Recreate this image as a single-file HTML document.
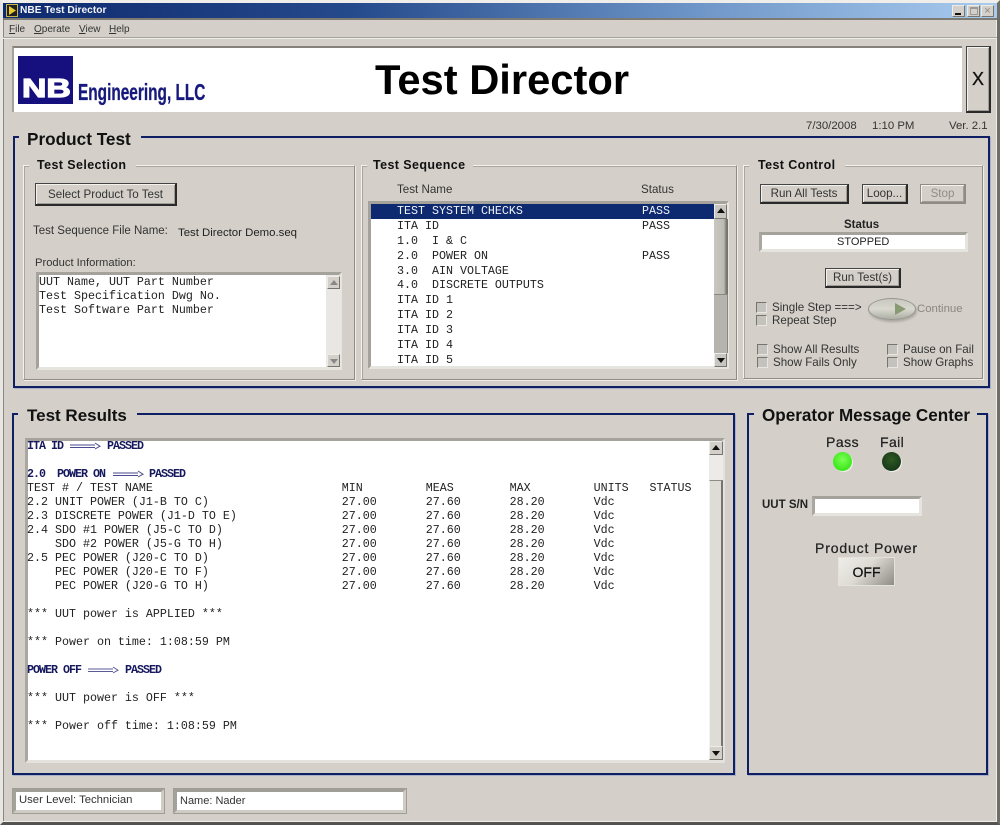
<!DOCTYPE html>
<html><head><meta charset="utf-8"><title>NBE Test Director</title>
<style>
html,body{margin:0;padding:0;background:#d4d0c9;}
#w{position:relative;width:1000px;height:825px;overflow:hidden;background:#d4d0c9;font-family:"Liberation Sans",sans-serif;color:#222;}
#w div,#w span.t{position:absolute;box-sizing:border-box;}
.t{white-space:pre;line-height:14px;font-size:11.6px;color:#333;}
.m{font-family:"Liberation Mono",monospace;font-size:11.67px;color:#222;}
.b{font-weight:bold;color:#111;}
.navy{border:2px solid #0f1f63;box-shadow:1px 1px 0 #aab0c8;}
.gap{background:#d4d0c9;height:4px;}
.gr{border:1px solid;border-color:#f4f2ee #8f8c86 #8f8c86 #f4f2ee;box-shadow:1px 1px 0 #f0eeea,inset 1px 1px 0 #a9a69f;}
.btn{background:#d4d0c9;border:1px solid #444;border-right:2px solid #2a2a2a;border-bottom:2px solid #2a2a2a;box-shadow:inset 1px 1px 0 #f4f2ee,inset -1px -1px 0 #a09d96;text-align:center;font-size:11.6px;color:#333;line-height:18px;}
.ins{background:#fff;border:3px solid #c2bfb8;border-top-color:#a5a29c;border-left-color:#aaa7a0;border-right-color:#e6e4df;border-bottom-color:#e6e4df;}
.cb{width:11px;height:11px;background:#c4c2bd;border:1px solid #e8e6e2;border-top-color:#77746e;border-left-color:#77746e;}
.sb{background:#c8c6c0;border:1px solid #eeece8;border-right-color:#77746e;border-bottom-color:#77746e;text-align:center;}
.up{width:0;height:0;border-left:4px solid transparent;border-right:4px solid transparent;border-bottom:5px solid #111;left:2px;top:3px;}
.dn{width:0;height:0;border-left:4px solid transparent;border-right:4px solid transparent;border-top:5px solid #111;left:2px;top:4px;}
.hl{font-family:"Liberation Mono",monospace;font-size:11.67px;letter-spacing:-1px;color:#16185e;font-weight:bold;}
</style></head><body><div id="w">

<!-- window frame -->
<div style="left:0;top:0;width:1000px;height:825px;border:3px solid #d4d0c9;border-top-color:#f0eeea;border-left-color:#e8e6e2;border-right-color:#6f6d68;border-bottom-color:#55534f;"></div>
<div style="left:3px;top:3px;width:1px;height:819px;background:#8a8780;"></div>
<div style="left:996px;top:20px;width:1px;height:802px;background:#f0eeea;"></div>
<div style="left:3px;top:821px;width:994px;height:1px;background:#f0eeea;"></div>
<div style="left:3px;top:3px;width:994px;height:15px;background:linear-gradient(90deg,#0e2a6e 0%,#254a8c 35%,#6f96c8 70%,#a8cbee 100%);"></div>
<div style="left:3px;top:18px;width:994px;height:2px;background:#7d7a74;"></div>
<div style="left:6px;top:4px;width:12px;height:13px;background:#222;border:1px solid #c9b64a;"></div>
<svg style="position:absolute;left:8px;top:6px" width="9" height="9"><path d="M1 0 L8 4.5 L1 9 Z" fill="#e8c92e"/></svg>
<span class="t b" style="left:20px;top:3px;color:#f4f4f8;font-size:10.2px;line-height:16px;">NBE Test Director</span>
<div class="sb" style="left:952px;top:5px;width:13px;height:12px;background:#d4d0c9;"><div style="left:2px;bottom:1px;width:6px;height:2px;background:#111;"></div></div>
<div class="sb" style="left:967px;top:5px;width:13px;height:12px;background:#d4d0c9;"><div style="left:2px;top:1px;width:8px;height:8px;border:1px solid #999;border-top-width:2px;"></div></div>
<div class="sb" style="left:981px;top:5px;width:13px;height:12px;background:#d4d0c9;color:#888;font-size:11px;line-height:10px;">×</div>

<!-- menu -->
<span class="t" style="left:9px;top:23px;font-size:10px;"><u>F</u>ile</span>
<span class="t" style="left:34px;top:23px;font-size:10px;"><u>O</u>perate</span>
<span class="t" style="left:79px;top:23px;font-size:10px;"><u>V</u>iew</span>
<span class="t" style="left:109px;top:23px;font-size:10px;"><u>H</u>elp</span>
<div style="left:3px;top:37px;width:994px;height:1px;background:#a5a29c;"></div>
<div style="left:3px;top:38px;width:994px;height:1px;background:#f0eeea;"></div>

<!-- banner -->
<div style="left:12px;top:46px;width:950px;height:66px;background:#fff;border-top:2px solid #85827c;border-left:2px solid #a5a29c;"></div>
<div style="left:18px;top:56px;width:55px;height:48px;background:#16107e;"></div>
<span class="t" style="left:22px;top:76px;font-size:26px;line-height:24px;font-weight:bold;color:#fff;letter-spacing:0;transform-origin:0 0;transform:scaleX(1.3);-webkit-text-stroke:1.2px #fff;">NB</span>
<span class="t" style="left:78px;top:79px;font-size:23.5px;line-height:26px;font-weight:bold;color:#17197c;transform-origin:0 0;transform:scaleX(.655);-webkit-text-stroke:.3px #17197c;">Engineering, LLC</span>
<span class="t" style="left:375px;top:56px;font-size:41.7px;line-height:48px;font-weight:bold;color:#000;">Test Director</span>
<div class="btn" style="left:966px;top:46px;width:25px;height:67px;font-size:18px;line-height:64px;color:#111;-webkit-text-stroke:.3px #111;">X</div>
<span class="t" style="left:806px;top:119px;font-size:11.4px;">7/30/2008</span>
<span class="t" style="left:872px;top:119px;font-size:11.4px;">1:10 PM</span>
<span class="t" style="left:949px;top:119px;font-size:11.4px;">Ver. 2.1</span>

<!-- Product Test group -->
<div class="navy" style="left:13px;top:136px;width:977px;height:252px;"></div>
<div class="gap" style="left:19px;top:135px;width:122px;"></div>
<span class="t b" style="left:27px;top:130px;font-size:17.2px;line-height:18px;">Product Test</span>

<!-- Test Selection -->
<div class="gr" style="left:23px;top:165px;width:332px;height:215px;"></div>
<div class="gap" style="left:29px;top:164px;width:107px;"></div>
<span class="t b" style="left:37px;top:158px;font-size:12.5px;letter-spacing:.4px;">Test Selection</span>
<div class="btn" style="left:35px;top:183px;width:142px;height:23px;line-height:21px;">Select Product To Test</div>
<span class="t" style="left:33px;top:224px;font-size:11.5px;">Test Sequence File Name:</span>
<span class="t" style="left:178px;top:226px;color:#222;font-size:11.4px;">Test Director Demo.seq</span>
<span class="t" style="left:35px;top:256px;font-size:11.2px;">Product Information:</span>
<div class="ins" style="left:36px;top:272px;width:306px;height:98px;border-color:#a5a29c #e6e4df #e6e4df #a5a29c;"></div>
<span class="t m" style="left:39px;top:275px;">UUT Name, UUT Part Number
Test Specification Dwg No.
Test Software Part Number</span>
<div style="left:326px;top:275px;width:15px;height:93px;background:#e9e7e3;"></div>
<div class="sb" style="left:327px;top:276px;width:13px;height:13px;background:#d4d0c9;"><div class="up" style="border-bottom-color:#888;"></div></div>
<div class="sb" style="left:327px;top:354px;width:13px;height:13px;background:#d4d0c9;"><div class="dn" style="border-top-color:#888;"></div></div>

<!-- Test Sequence -->
<div class="gr" style="left:361px;top:165px;width:376px;height:215px;"></div>
<div class="gap" style="left:367px;top:164px;width:106px;"></div>
<span class="t b" style="left:373px;top:158px;font-size:12.5px;letter-spacing:.4px;">Test Sequence</span>
<span class="t" style="left:397px;top:183px;">Test Name</span>
<span class="t" style="left:641px;top:183px;">Status</span>
<div class="ins" style="left:368px;top:201px;width:361px;height:168px;border-color:#a5a29c #e6e4df #e6e4df #a5a29c;"></div>
<div style="left:371px;top:204px;width:343px;height:15px;background:#0d2a70;"></div>
<span class="t m" style="left:397px;top:204px;color:#f2f2f6;">TEST SYSTEM CHECKS</span>
<span class="t m" style="left:642px;top:204px;color:#f2f2f6;">PASS</span>
<span class="t m" style="left:397px;top:219px;">ITA ID</span><span class="t m" style="left:642px;top:219px;">PASS</span>
<span class="t m" style="left:397px;top:234px;">1.0  I &amp; C</span>
<span class="t m" style="left:397px;top:249px;">2.0  POWER ON</span><span class="t m" style="left:642px;top:249px;">PASS</span>
<span class="t m" style="left:397px;top:264px;">3.0  AIN VOLTAGE</span>
<span class="t m" style="left:397px;top:278px;">4.0  DISCRETE OUTPUTS</span>
<span class="t m" style="left:397px;top:293px;">ITA ID 1</span>
<span class="t m" style="left:397px;top:308px;">ITA ID 2</span>
<span class="t m" style="left:397px;top:323px;">ITA ID 3</span>
<span class="t m" style="left:397px;top:338px;">ITA ID 4</span>
<span class="t m" style="left:397px;top:353px;">ITA ID 5</span>
<div style="left:714px;top:219px;width:14px;height:76px;background:linear-gradient(90deg,#c9c7c1,#bdbbb5 70%,#77746e 90%);border-bottom:1px solid #8a8780;"></div>
<div style="left:714px;top:295px;width:14px;height:58px;background:#b6b4af;border-right:1px solid #8a8780;"></div>
<div class="sb" style="left:714px;top:204px;width:13px;height:15px;"><div class="up"></div></div>
<div class="sb" style="left:714px;top:353px;width:13px;height:14px;"><div class="dn"></div></div>

<!-- Test Control -->
<div class="gr" style="left:743px;top:165px;width:240px;height:214px;"></div>
<div class="gap" style="left:749px;top:164px;width:96px;"></div>
<span class="t b" style="left:758px;top:158px;font-size:12.5px;letter-spacing:.4px;">Test Control</span>
<div class="btn" style="left:760px;top:184px;width:89px;height:20px;">Run All Tests</div>
<div class="btn" style="left:862px;top:184px;width:46px;height:20px;">Loop...</div>
<div class="btn" style="left:920px;top:184px;width:46px;height:20px;color:#8f8c86;border-color:#8f8c86;">Stop</div>
<span class="t" style="left:844px;top:218px;font-size:11.5px;font-weight:bold;color:#222;">Status</span>
<div class="ins" style="left:759px;top:232px;width:209px;height:20px;"></div>
<span class="t" style="left:837px;top:235px;font-size:11px;color:#222;">STOPPED</span>
<div class="btn" style="left:825px;top:268px;width:76px;height:20px;">Run Test(s)</div>
<div class="cb" style="left:756px;top:302px;"></div>
<div class="cb" style="left:756px;top:315px;"></div>
<span class="t" style="left:772px;top:301px;">Single Step ===&gt;</span>
<span class="t" style="left:772px;top:314px;">Repeat Step</span>
<div style="left:868px;top:298px;width:48px;height:22px;border-radius:50%;background:linear-gradient(#c9c8c0,#d8d8cf 50%,#aeb0a4);border:1px solid #989690;box-shadow:1px 2px 2px #aaa7a0;"></div>
<svg style="position:absolute;left:894px;top:303px" width="14" height="12"><path d="M1 0 L12 6 L1 12 Z" fill="#889a72"/></svg>
<span class="t" style="left:917px;top:302px;color:#8a8780;font-size:11.4px;">Continue</span>
<div class="cb" style="left:757px;top:344px;"></div>
<div class="cb" style="left:757px;top:357px;"></div>
<span class="t" style="left:773px;top:343px;">Show All Results</span>
<span class="t" style="left:773px;top:356px;">Show Fails Only</span>
<div class="cb" style="left:887px;top:344px;"></div>
<div class="cb" style="left:887px;top:357px;"></div>
<span class="t" style="left:903px;top:343px;">Pause on Fail</span>
<span class="t" style="left:903px;top:356px;">Show Graphs</span>

<!-- Test Results -->
<div class="navy" style="left:12px;top:413px;width:723px;height:362px;"></div>
<div class="gap" style="left:18px;top:412px;width:119px;"></div>
<span class="t b" style="left:27px;top:407px;font-size:17px;line-height:18px;">Test Results</span>
<div style="left:25px;top:438px;width:700px;height:325px;background:#fff;border:3px solid #e4e2dd;border-top-color:#a5a29c;border-left-color:#aaa7a0;"></div>
<span class="t m" style="left:27px;top:481px;">TEST # / TEST NAME                           MIN         MEAS        MAX         UNITS   STATUS
2.2 UNIT POWER (J1-B TO C)                   27.00       27.60       28.20       Vdc
2.3 DISCRETE POWER (J1-D TO E)               27.00       27.60       28.20       Vdc
2.4 SDO #1 POWER (J5-C TO D)                 27.00       27.60       28.20       Vdc
    SDO #2 POWER (J5-G TO H)                 27.00       27.60       28.20       Vdc
2.5 PEC POWER (J20-C TO D)                   27.00       27.60       28.20       Vdc
    PEC POWER (J20-E TO F)                   27.00       27.60       28.20       Vdc
    PEC POWER (J20-G TO H)                   27.00       27.60       28.20       Vdc

*** UUT power is APPLIED ***

*** Power on time: 1:08:59 PM</span>
<span class="t m" style="left:27px;top:691px;">*** UUT power is OFF ***

*** Power off time: 1:08:59 PM</span>
<span class="t hl" style="left:27px;top:439px;">ITA ID</span>
<span class="t hl" style="left:107px;top:439px;">PASSED</span>
<span class="t hl" style="left:27px;top:467px;">2.0  POWER ON</span>
<span class="t hl" style="left:149px;top:467px;">PASSED</span>
<span class="t hl" style="left:27px;top:663px;">POWER OFF</span>
<span class="t hl" style="left:125px;top:663px;">PASSED</span>
<svg style="position:absolute;left:70px;top:441px" width="32" height="10"><path d="M0 4H25M0 6.5H25M25 2L30 5.2L25 8" fill="none" stroke="#4a4a8e" stroke-width="1"/></svg>
<svg style="position:absolute;left:113px;top:469px" width="32" height="10"><path d="M0 4H25M0 6.5H25M25 2L30 5.2L25 8" fill="none" stroke="#4a4a8e" stroke-width="1"/></svg>
<svg style="position:absolute;left:88px;top:665px" width="32" height="10"><path d="M0 4H25M0 6.5H25M25 2L30 5.2L25 8" fill="none" stroke="#5a5a98" stroke-width="1"/></svg>
<div style="left:709px;top:441px;width:14px;height:320px;background:#e4e2dd;"></div>
<div style="left:709px;top:480px;width:14px;height:266px;background:#dedcd7;border-left:1px solid #f4f2ee;border-top:1px solid #8f8c86;border-right:2px solid #77746e;"></div>
<div style="left:709px;top:455px;width:14px;height:25px;background:#ecebe7;"></div>
<div class="sb" style="left:709px;top:441px;width:14px;height:14px;background:#d4d0c9;"><div class="up"></div></div>
<div class="sb" style="left:709px;top:746px;width:14px;height:14px;background:#d4d0c9;"><div class="dn"></div></div>

<!-- Operator Message Center -->
<div class="navy" style="left:747px;top:413px;width:241px;height:362px;"></div>
<div class="gap" style="left:754px;top:412px;width:223px;"></div>
<span class="t b" style="left:762px;top:407px;font-size:17.1px;line-height:18px;">Operator Message Center</span>
<span class="t" style="left:826px;top:435px;font-size:14px;letter-spacing:.5px;color:#222;-webkit-text-stroke:.25px #222;">Pass</span>
<span class="t" style="left:880px;top:435px;font-size:14px;letter-spacing:.4px;color:#222;-webkit-text-stroke:.25px #222;">Fail</span>
<div style="left:834px;top:453px;width:19px;height:19px;border-radius:50%;background:#f2f0ec;"></div>
<div style="left:833px;top:452px;width:19px;height:19px;border-radius:50%;background:radial-gradient(circle at 50% 40%,#7dff55,#3ce81c 70%,#2bb014);"></div>
<div style="left:883px;top:453px;width:19px;height:19px;border-radius:50%;background:#f2f0ec;"></div>
<div style="left:882px;top:452px;width:19px;height:19px;border-radius:50%;background:radial-gradient(circle at 50% 40%,#2f5a22,#17381a 75%,#112a12);"></div>
<span class="t" style="left:762px;top:498px;font-size:11.5px;font-weight:bold;color:#222;">UUT S/N</span>
<div class="ins" style="left:812px;top:496px;width:110px;height:20px;"></div>
<span class="t" style="left:815px;top:541px;font-size:14px;letter-spacing:.85px;color:#222;-webkit-text-stroke:.25px #222;">Product Power</span>
<div style="left:838px;top:557px;width:57px;height:29px;background:linear-gradient(135deg,#efede8 0%,#dedbd5 45%,#8f8c84 100%);border:1px solid #e4e2dd;text-align:center;font-size:14px;line-height:28px;color:#111;-webkit-text-stroke:.25px #111;">OFF</div>

<!-- Status bar -->
<div style="left:12px;top:788px;width:153px;height:26px;background:#fff;border:4px solid #cfccc5;border-top-color:#a09d96;border-left-color:#a5a29c;outline:1px solid #a09d96;outline-offset:-1px;"></div>
<span class="t" style="left:19px;top:793px;font-size:11.3px;">User Level: Technician</span>
<div style="left:173px;top:788px;width:234px;height:26px;background:#fff;border:4px solid #cfccc5;border-top-color:#a09d96;border-left-color:#a5a29c;outline:1px solid #a09d96;outline-offset:-1px;"></div>
<span class="t" style="left:180px;top:794px;font-size:11px;">Name: Nader</span>

</div></body></html>
